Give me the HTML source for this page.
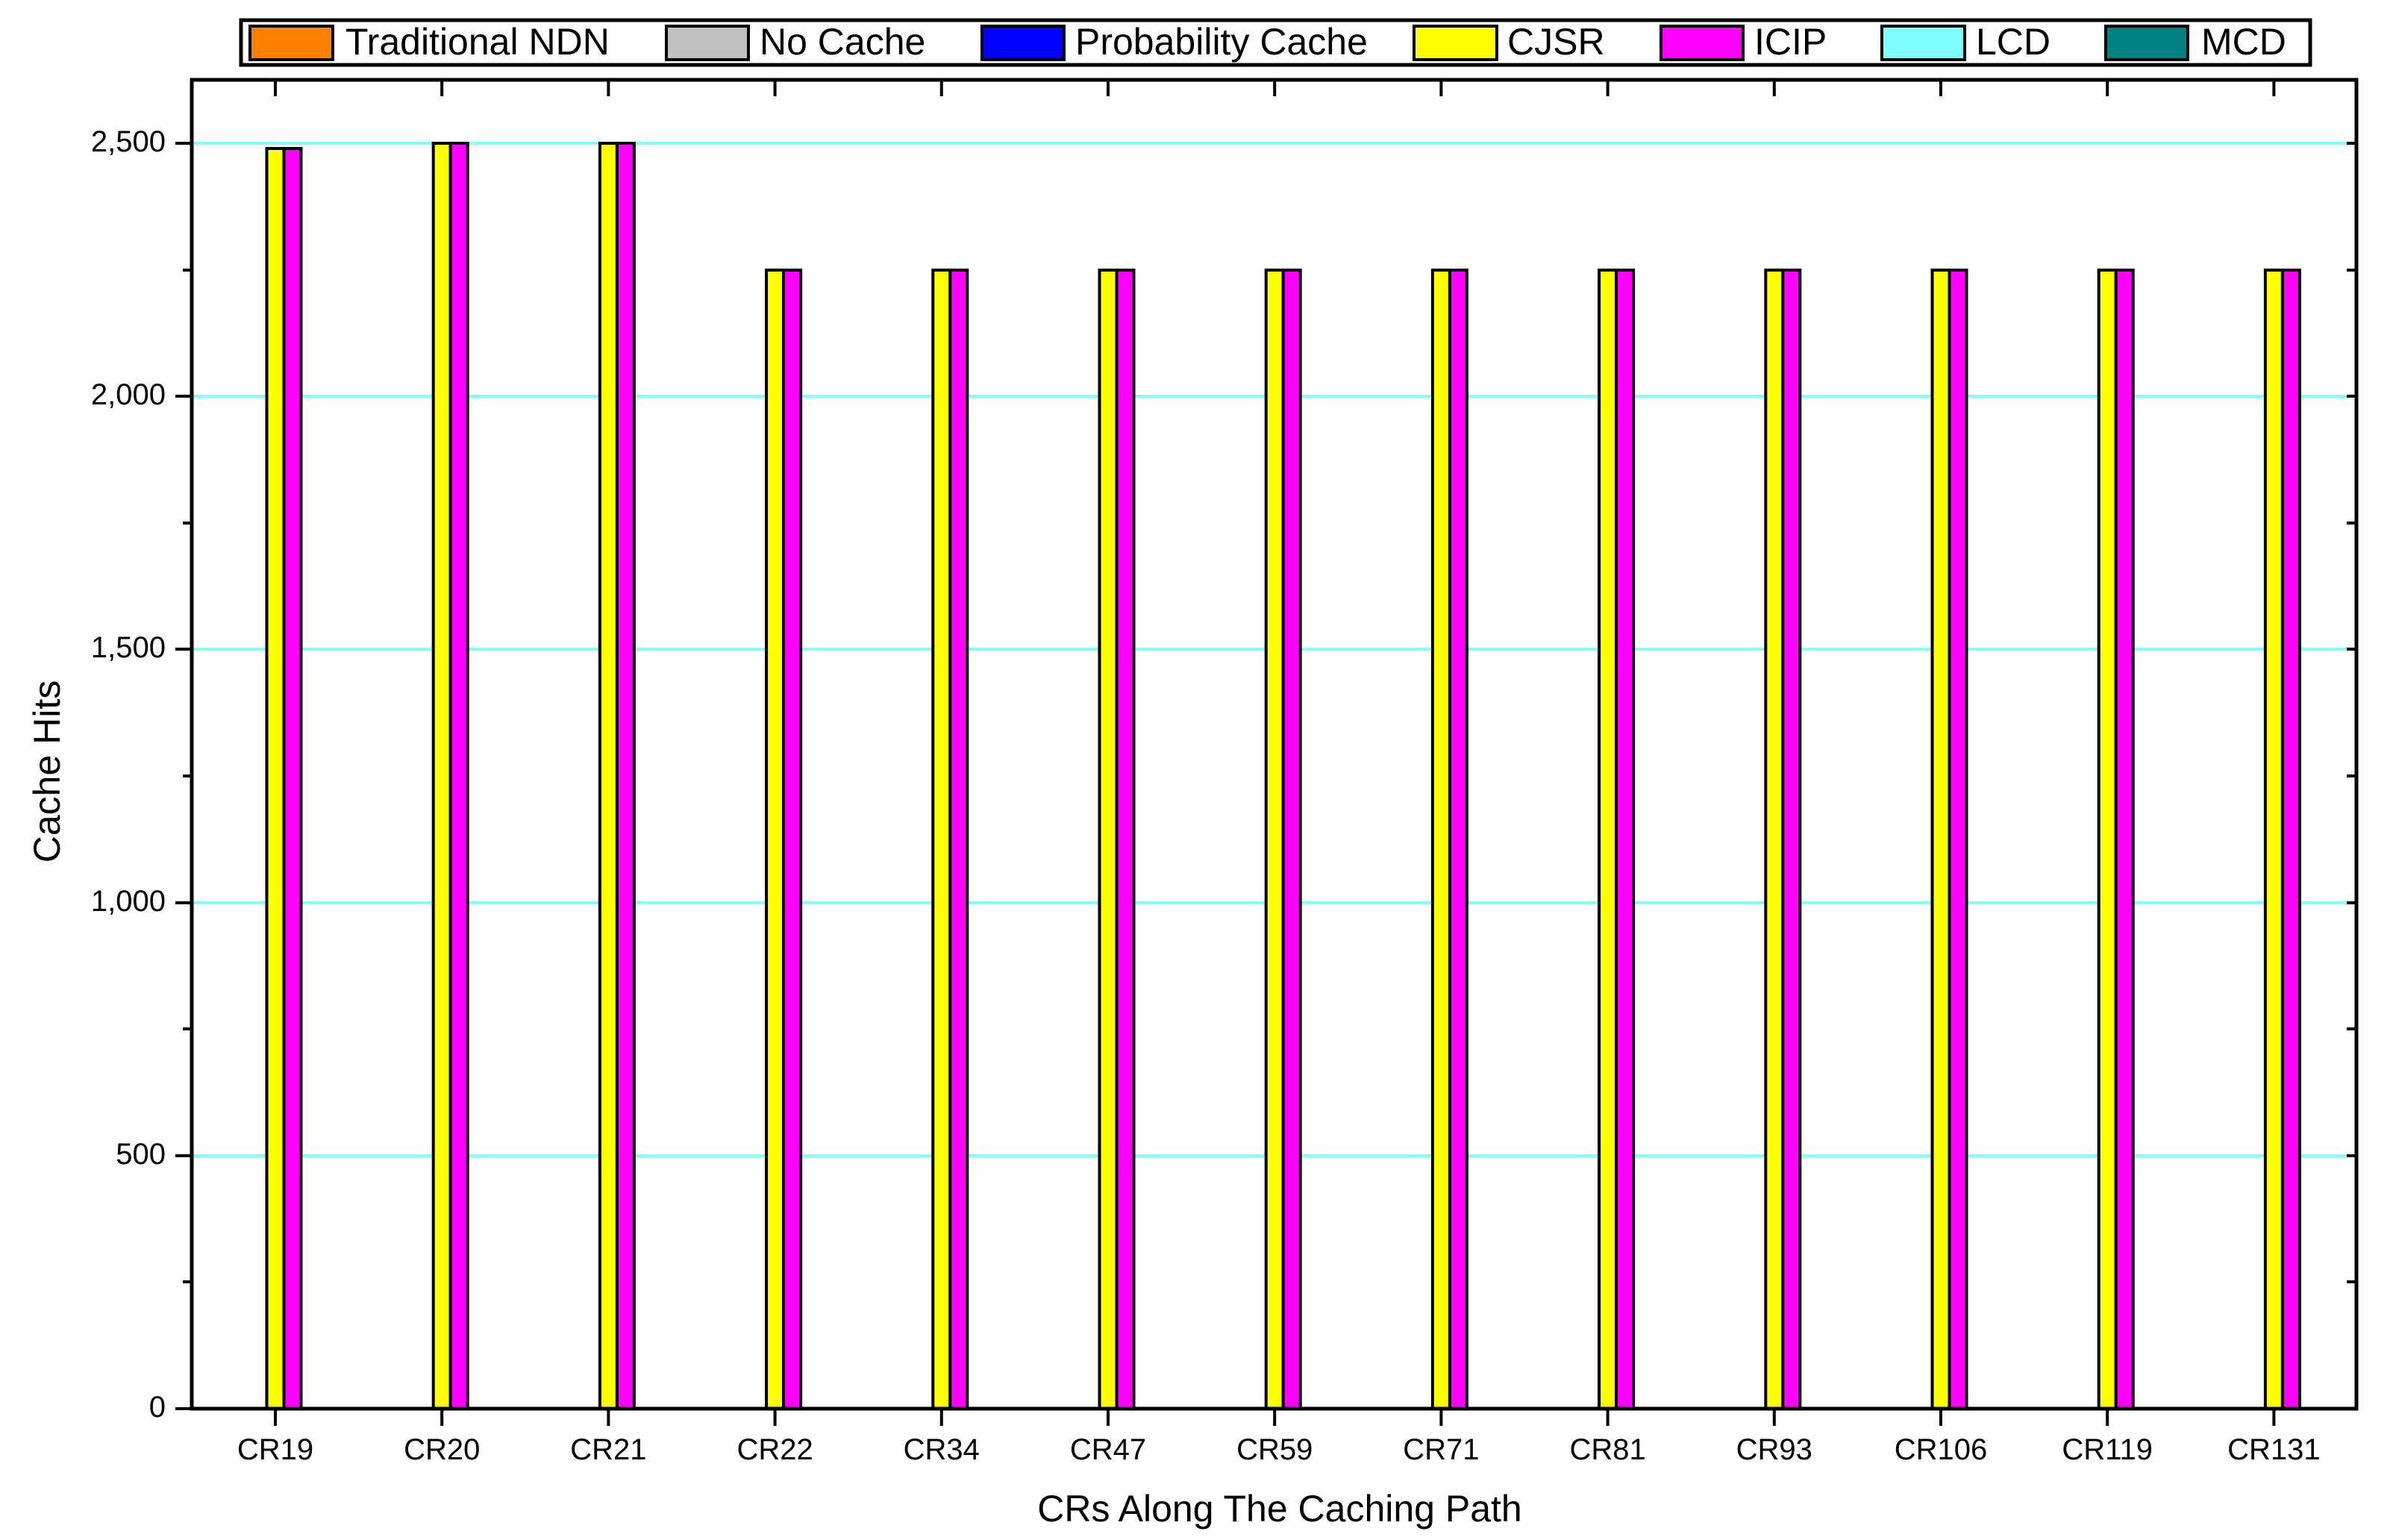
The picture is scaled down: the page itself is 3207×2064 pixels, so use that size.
<!DOCTYPE html>
<html><head><meta charset="utf-8"><style>
html,body{margin:0;padding:0;background:#fff;}
svg{display:block;}
text{font-family:"Liberation Sans",Arial,sans-serif;fill:#000;}
</style></head><body>
<svg width="3207" height="2064" viewBox="0 0 3207 2064" xmlns="http://www.w3.org/2000/svg">
<rect width="3207" height="2064" fill="#fff"/>
<rect x="323" y="27" width="2773" height="60" fill="#fff" stroke="#000" stroke-width="5"/>
<g stroke="#000" stroke-width="4">
<rect x="335" y="35" width="111" height="45" fill="#FF8000"/>
<rect x="893" y="35" width="110" height="45" fill="#C0C0C0"/>
<rect x="1316" y="35" width="110" height="45" fill="#0000FF"/>
<rect x="1895" y="35" width="111" height="45" fill="#FFFF00"/>
<rect x="2226" y="35" width="110" height="45" fill="#FF00FF"/>
<rect x="2522" y="35" width="111" height="45" fill="#80FFFF"/>
<rect x="2822" y="35" width="110" height="45" fill="#008080"/>
</g>
<g font-size="50">
<text x="463" y="73">Traditional NDN</text>
<text x="1018" y="73">No Cache</text>
<text x="1441" y="73">Probability Cache</text>
<text x="2020" y="73">CJSR</text>
<text x="2351" y="73">ICIP</text>
<text x="2648" y="73">LCD</text>
<text x="2950" y="73">MCD</text>
</g>
<g stroke="#80FFFF" stroke-width="4">
<line x1="259" x2="3156" y1="1549" y2="1549"/>
<line x1="259" x2="3156" y1="1210" y2="1210"/>
<line x1="259" x2="3156" y1="870" y2="870"/>
<line x1="259" x2="3156" y1="531" y2="531"/>
<line x1="259" x2="3156" y1="192" y2="192"/>
</g>
<g stroke="#000" stroke-width="4">
<rect x="357.5" y="199" width="23" height="1689" fill="#FFFF00"/><rect x="380.5" y="199" width="23" height="1689" fill="#FF00FF"/>
<rect x="580.7" y="192" width="23" height="1696" fill="#FFFF00"/><rect x="603.7" y="192" width="23" height="1696" fill="#FF00FF"/>
<rect x="803.9" y="192" width="23" height="1696" fill="#FFFF00"/><rect x="826.9" y="192" width="23" height="1696" fill="#FF00FF"/>
<rect x="1027.1" y="362" width="23" height="1526" fill="#FFFF00"/><rect x="1050.1" y="362" width="23" height="1526" fill="#FF00FF"/>
<rect x="1250.3" y="362" width="23" height="1526" fill="#FFFF00"/><rect x="1273.3" y="362" width="23" height="1526" fill="#FF00FF"/>
<rect x="1473.5" y="362" width="23" height="1526" fill="#FFFF00"/><rect x="1496.5" y="362" width="23" height="1526" fill="#FF00FF"/>
<rect x="1696.7" y="362" width="23" height="1526" fill="#FFFF00"/><rect x="1719.7" y="362" width="23" height="1526" fill="#FF00FF"/>
<rect x="1919.9" y="362" width="23" height="1526" fill="#FFFF00"/><rect x="1942.9" y="362" width="23" height="1526" fill="#FF00FF"/>
<rect x="2143.1" y="362" width="23" height="1526" fill="#FFFF00"/><rect x="2166.1" y="362" width="23" height="1526" fill="#FF00FF"/>
<rect x="2366.3" y="362" width="23" height="1526" fill="#FFFF00"/><rect x="2389.3" y="362" width="23" height="1526" fill="#FF00FF"/>
<rect x="2589.5" y="362" width="23" height="1526" fill="#FFFF00"/><rect x="2612.5" y="362" width="23" height="1526" fill="#FF00FF"/>
<rect x="2812.7" y="362" width="23" height="1526" fill="#FFFF00"/><rect x="2835.7" y="362" width="23" height="1526" fill="#FF00FF"/>
<rect x="3035.9" y="362" width="23" height="1526" fill="#FFFF00"/><rect x="3058.9" y="362" width="23" height="1526" fill="#FF00FF"/>
</g>
<rect x="257" y="107" width="2901" height="1781" fill="none" stroke="#000" stroke-width="5"/>
<g stroke="#000" stroke-width="4">
<line x1="235" x2="257" y1="1888" y2="1888"/><line x1="235" x2="257" y1="1549" y2="1549"/><line x1="235" x2="257" y1="1210" y2="1210"/><line x1="235" x2="257" y1="870" y2="870"/><line x1="235" x2="257" y1="531" y2="531"/><line x1="235" x2="257" y1="192" y2="192"/>
<line x1="245" x2="257" y1="1718" y2="1718"/><line x1="245" x2="257" y1="1379" y2="1379"/><line x1="245" x2="257" y1="1040" y2="1040"/><line x1="245" x2="257" y1="701" y2="701"/><line x1="245" x2="257" y1="362" y2="362"/>
<line x1="3145" x2="3158" y1="1718" y2="1718"/><line x1="3145" x2="3158" y1="1549" y2="1549"/><line x1="3145" x2="3158" y1="1379" y2="1379"/><line x1="3145" x2="3158" y1="1210" y2="1210"/><line x1="3145" x2="3158" y1="1040" y2="1040"/><line x1="3145" x2="3158" y1="870" y2="870"/><line x1="3145" x2="3158" y1="701" y2="701"/><line x1="3145" x2="3158" y1="531" y2="531"/><line x1="3145" x2="3158" y1="362" y2="362"/><line x1="3145" x2="3158" y1="192" y2="192"/>
</g>
<g stroke="#000" stroke-width="4">
<path d="M369 107v22M592.2 107v22M815.4 107v22M1038.6 107v22M1261.8 107v22M1485 107v22M1708.2 107v22M1931.4 107v22M2154.6 107v22M2377.8 107v22M2601 107v22M2824.2 107v22M3047.4 107v22"/>
<path d="M369 1888v23M592.2 1888v23M815.4 1888v23M1038.6 1888v23M1261.8 1888v23M1485 1888v23M1708.2 1888v23M1931.4 1888v23M2154.6 1888v23M2377.8 1888v23M2601 1888v23M2824.2 1888v23M3047.4 1888v23"/>
</g>
<g font-size="40" text-anchor="end">
<text x="222" y="1899">0</text>
<text x="222" y="1560">500</text>
<text x="222" y="1221">1,000</text>
<text x="222" y="881">1,500</text>
<text x="222" y="542">2,000</text>
<text x="222" y="203">2,500</text>
</g>
<g font-size="40" text-anchor="middle">
<text x="369" y="1956">CR19</text>
<text x="592.2" y="1956">CR20</text>
<text x="815.4" y="1956">CR21</text>
<text x="1038.6" y="1956">CR22</text>
<text x="1261.8" y="1956">CR34</text>
<text x="1485" y="1956">CR47</text>
<text x="1708.2" y="1956">CR59</text>
<text x="1931.4" y="1956">CR71</text>
<text x="2154.6" y="1956">CR81</text>
<text x="2377.8" y="1956">CR93</text>
<text x="2601" y="1956">CR106</text>
<text x="2824.2" y="1956">CR119</text>
<text x="3047.4" y="1956">CR131</text>
</g>
<text x="1715" y="2039" font-size="50" text-anchor="middle">CRs Along The Caching Path</text>
<text transform="translate(80,1034) rotate(-90)" font-size="50" text-anchor="middle">Cache Hits</text>
</svg>
</body></html>
